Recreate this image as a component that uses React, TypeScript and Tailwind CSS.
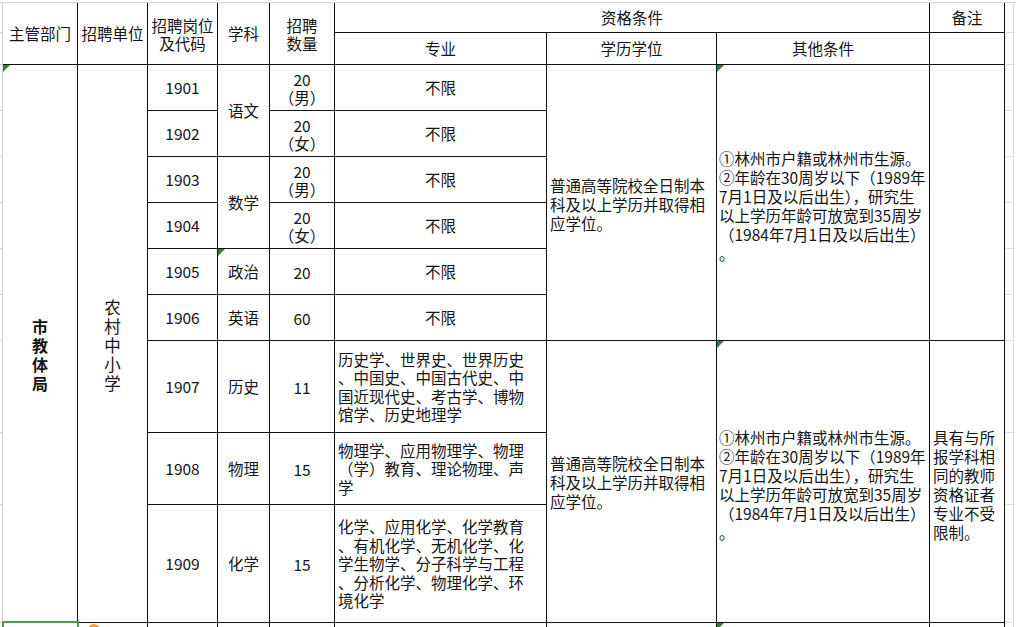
const line = "border-r border-b border-[#111]";
const center = "flex items-center justify-center text-center";

const Tri = () => (
  <div className="absolute left-0 top-0 h-0 w-0 border-t-[7px] border-r-[7px] border-t-[#3d7a3d] border-r-transparent" />
);

const codes = ["1901", "1902", "1903", "1904", "1905", "1906", "1907", "1908", "1909"];
const counts: string[][] = [["20", "（男）"], ["20", "（女）"], ["20", "（男）"], ["20", "（女）"], ["20"], ["60"], ["11"], ["15"], ["15"]];

const majors: string[][] = [
  ["不限"],
  ["不限"],
  ["不限"],
  ["不限"],
  ["不限"],
  ["不限"],
  ["历史学、世界史、世界历史", "、中国史、中国古代史、中", "国近现代史、考古学、博物", "馆学、历史地理学"],
  ["物理学、应用物理学、物理", "（学）教育、理论物理、声", "学"],
  ["化学、应用化学、化学教育", "、有机化学、无机化学、化", "学生物学、分子科学与工程", "、分析化学、物理化学、环", "境化学"],
];

const rowStart = ["row-start-3", "row-start-4", "row-start-5", "row-start-6", "row-start-7", "row-start-8", "row-start-9", "row-start-10", "row-start-11", "row-start-12"];

const degree = ["普通高等院校全日制本", "科及以上学历并取得相", "应学位。"];
const other = [
  "①林州市户籍或林州市生源。",
  "②年龄在30周岁以下（1989年",
  "7月1日及以后出生），研究生",
  "以上学历年龄可放宽到35周岁",
  "（1984年7月1日及以后出生）",
  "。",
];
const note = ["具有与所", "报学科相", "同的教师", "资格证者", "专业不受", "限制。"];

const Lines = ({ items, className = "" }: { items: string[]; className?: string }) => (
  <div className={className}>
    {items.map((t, i) => (
      <div key={i} className="whitespace-nowrap">
        {t}
      </div>
    ))}
  </div>
);

export default function App() {
  return (
    <div
      className="h-[627px] w-[1016px] overflow-hidden bg-white pt-[2px] text-[15.5px] leading-[19px] text-[#151515]"
      style={{ fontFamily: '"Noto Sans CJK SC", "Noto Sans", sans-serif' }}
    >
      <div className="grid grid-cols-[3px_75px_70px_70px_52px_65px_212px_170px_213px_75px_9px] grid-rows-[30px_32px_46px_46px_46px_46px_46px_46px_92px_72px_118px_40px] border-t border-[#d4d4d4]">
        {/* gutter + right grey gridlines */}
        {rowStart.concat(["row-start-1", "row-start-2"]).map((r) => (
          <div key={"g" + r} className={`${r} col-start-1 border-r border-b border-[#d0d0d0]`} />
        ))}
        {rowStart.concat(["row-start-1", "row-start-2"]).map((r) => (
          <div key={"e" + r} className={`${r} col-start-11 border-r border-b border-[#dcdcdc]`} />
        ))}

        {/* header */}
        <div className={`col-start-2 row-start-1 row-span-2 ${line} ${center}`}>主管部门</div>
        <div className={`col-start-3 row-start-1 row-span-2 ${line} ${center}`}>招聘单位</div>
        <div className={`col-start-4 row-start-1 row-span-2 ${line} ${center} leading-[18px]`}>
          招聘岗位
          <br />
          及代码
        </div>
        <div className={`col-start-5 row-start-1 row-span-2 ${line} ${center}`}>学科</div>
        <div className={`col-start-6 row-start-1 row-span-2 ${line} ${center} leading-[18px]`}>
          招聘
          <br />
          数量
        </div>
        <div className={`col-start-7 col-span-3 row-start-1 ${line} ${center}`}>资格条件</div>
        <div className={`col-start-10 row-start-1 ${line} ${center}`}>备注</div>
        <div className={`col-start-7 row-start-2 ${line} ${center}`}>专业</div>
        <div className={`col-start-8 row-start-2 ${line} ${center}`}>学历学位</div>
        <div className={`col-start-9 row-start-2 ${line} ${center}`}>其他条件</div>
        <div className={`col-start-10 row-start-2 ${line}`} />

        {/* merged left columns */}
        <div className={`relative col-start-2 row-start-3 row-span-9 ${line} flex flex-col items-center justify-center pt-[22px] text-[16px] leading-[19px] font-bold`}>
          <Tri />
          <div className="w-[17px] break-all text-center">市教体局</div>
        </div>
        <div className={`col-start-3 row-start-3 row-span-9 ${line} flex flex-col items-center justify-center pt-[4px] text-[16.5px] leading-[19px]`}>
          <div className="w-[17px] break-all text-center">农村中小学</div>
        </div>

        {/* per-row cells */}
        {codes.map((c, i) => (
          <div key={c} className={`col-start-4 ${rowStart[i]} ${line} ${center}`}>
            {c}
          </div>
        ))}
        {counts.map((c, i) => (
          <div key={"n" + i} className={`col-start-6 ${rowStart[i]} ${line} flex flex-col items-center justify-center leading-[18px]`}>
            {c.map((t) => (
              <div key={t}>{t}</div>
            ))}
          </div>
        ))}
        {majors.map((m, i) =>
          m.length === 1 ? (
            <div key={"m" + i} className={`col-start-7 ${rowStart[i]} ${line} ${center}`}>
              {m[0]}
            </div>
          ) : (
            <div key={"m" + i} className={`col-start-7 ${rowStart[i]} ${line} flex items-center pl-[3px] leading-[18.4px]`}>
              <Lines items={m} />
            </div>
          )
        )}

        {/* subjects */}
        <div className={`col-start-5 row-start-3 row-span-2 ${line} ${center}`}>语文</div>
        <div className={`col-start-5 row-start-5 row-span-2 ${line} ${center}`}>数学</div>
        <div className={`relative col-start-5 row-start-7 ${line} ${center}`}>
          <Tri />
          政治
        </div>
        <div className={`col-start-5 row-start-8 ${line} ${center}`}>英语</div>
        <div className={`col-start-5 row-start-9 ${line} ${center}`}>历史</div>
        <div className={`col-start-5 row-start-10 ${line} ${center}`}>物理</div>
        <div className={`col-start-5 row-start-11 ${line} ${center}`}>化学</div>

        {/* qualification groups */}
        <div className={`col-start-8 row-start-3 row-span-6 ${line} flex items-center pl-[3px] pt-[4px]`}>
          <Lines items={degree} />
        </div>
        <div className={`relative col-start-9 row-start-3 row-span-6 ${line} flex items-center pl-[2px] pt-[6px]`}>
          <Tri />
          <Lines items={other} />
        </div>
        <div className={`col-start-10 row-start-3 row-span-6 ${line}`} />

        <div className={`col-start-8 row-start-9 row-span-3 ${line} flex items-center pl-[3px] pt-[2px]`}>
          <Lines items={degree} />
        </div>
        <div className={`relative col-start-9 row-start-9 row-span-3 ${line} flex items-center pl-[2px] pt-[6px]`}>
          <Tri />
          <Lines items={other} />
        </div>
        <div className={`col-start-10 row-start-9 row-span-3 ${line} flex items-center pl-[3px] pt-[6px]`}>
          <Lines items={note} />
        </div>

        {/* next (cut off) row */}
        <div className={`relative col-start-2 row-start-12 ${line}`}>
          <div className="absolute -left-[1px] -top-[2px] h-[20px] w-[77px] border-2 border-[#4f9a55]" />
        </div>
        <div className={`relative col-start-3 row-start-12 ${line}`}>
          <div className="absolute left-[10px] top-[1px] h-[12px] w-[12px] rounded-full bg-[#e8a050]" />
        </div>
        <div className={`col-start-4 row-start-12 ${line}`} />
        <div className={`col-start-5 row-start-12 ${line}`} />
        <div className={`col-start-6 row-start-12 ${line}`} />
        <div className={`col-start-7 row-start-12 ${line} pl-[3px] pt-[2px]`}>生物技术、生物学、生物科</div>
        <div className={`col-start-8 row-start-12 ${line}`} />
        <div className={`relative col-start-9 row-start-12 ${line}`}>
          <Tri />
        </div>
        <div className={`col-start-10 row-start-12 ${line}`} />
      </div>
    </div>
  );
}
